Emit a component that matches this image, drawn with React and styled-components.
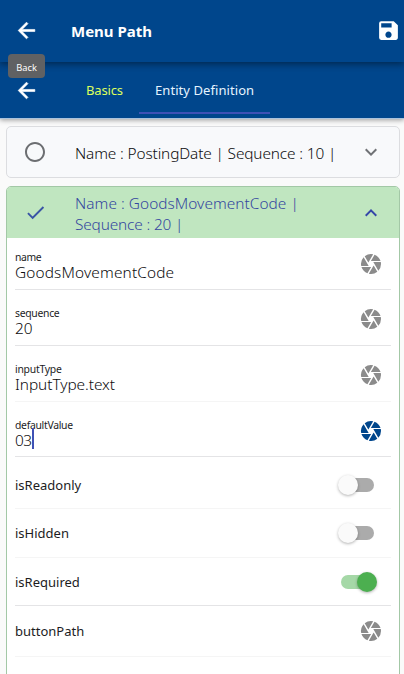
import React from "react";
import styled, { createGlobalStyle } from "styled-components";
import {
  MdArrowBack,
  MdSave,
  MdCamera,
  MdCheck,
  MdExpandMore,
  MdExpandLess,
  MdRadioButtonUnchecked,
} from "react-icons/md";

const GlobalStyle = createGlobalStyle`
  * { box-sizing: border-box; }
  body {
    margin: 0;
    overflow: hidden;
    background: #fafafa;
    font-family: "Noto Sans", "Open Sans", sans-serif;
  }
`;

const Page = styled.div`
  display: flex;
  flex-direction: column;
  height: 674px;
  overflow: hidden;
`;

const AppBar = styled.header`
  position: relative;
  z-index: 2;
  display: flex;
  align-items: center;
  flex: 0 0 62px;
  padding: 0 3px 2px 14px;
  color: #fff;
  background: #00468c;
  box-shadow: 0 2px 7px rgba(0, 0, 0, 0.45);
`;

const IconButton = styled.button`
  display: flex;
  padding: 0;
  border: 0;
  color: inherit;
  background: none;
  font-size: 25px;
`;

const BackButton = styled(IconButton)`
  path:last-child {
    stroke: currentColor;
    stroke-width: 0.6px;
  }
`;

const Title = styled.h1`
  flex: 1;
  margin: 2px 0 0 32px;
  font-size: 15px;
  font-weight: 750;
`;

const Tooltip = styled.div`
  position: absolute;
  left: 8px;
  top: 54px;
  width: 37px;
  height: 24px;
  border-radius: 4px;
  color: #fff;
  background: #606163;
  font-size: 9.3px;
  line-height: 28px;
  text-align: center;
`;

const TabBar = styled.nav`
  position: relative;
  z-index: 1;
  display: flex;
  align-items: center;
  flex: 0 0 56px;
  padding-left: 14px;
  color: #fff;
  background: #00468c;
  box-shadow: 0 1px 0 #a9c2dc, 0 2px 5px rgba(0, 0, 0, 0.4);
`;

const Tab = styled.div`
  height: 56px;
  width: ${(p) => p.$width}px;
  padding-left: 16px;
  margin-left: ${(p) => p.$gap || 0}px;
  color: ${(p) => (p.$active ? "#e6f4ff" : "#dcff5c")};
  font-size: 13px;
  line-height: 57px;
  letter-spacing: ${(p) => p.$tracking}px;
  white-space: nowrap;
`;

const ActiveTab = styled(Tab)`
  display: grid;
  grid-template-rows: 50px 2px;
  &::after {
    content: "";
    margin-left: -16px;
    background: #3f51b5;
  }
`;

const Panels = styled.main`
  display: flex;
  flex-direction: column;
  gap: 8px;
  flex: 1;
  min-height: 0;
  padding: 8px 4px 0 6px;
`;

const Panel = styled.section`
  flex: ${(p) => (p.$open ? "1 0 520px" : "0 0 52px")};
  border: 1px solid ${(p) => (p.$open ? "#a3c8a6" : "#dcdde0")};
  border-radius: 5px;
  overflow: hidden;
  background: ${(p) => (p.$open ? "#fff" : "#f8f9fb")};
`;

const PanelHeader = styled.div`
  display: grid;
  grid-template-columns: 68px 1fr 42px;
  align-items: center;
  height: ${(p) => (p.$open ? 51 : 50)}px;
  color: ${(p) => (p.$open ? "#34479f" : "#0c0c0e")};
  background: ${(p) => (p.$open ? "#c0e6c0" : "transparent")};
`;

const StateIcon = styled.span`
  display: flex;
  padding-left: ${(p) => p.$inset}px;
  color: ${(p) => p.$color};
  font-size: ${(p) => p.$size}px;
`;

const PanelTitle = styled.div`
  padding-top: 3px;
  font-size: 15.4px;
  font-weight: 350;
  line-height: 21px;
  white-space: nowrap;
`;

const TitleLine = styled.div`
  letter-spacing: ${(p) => p.$tracking}px;
`;

const Chevron = styled.span`
  display: flex;
  padding-left: 2px;
  font-size: 24px;
  color: ${(p) => (p.$open ? "#3547a8" : "#707276")};
`;

const Fields = styled.div`
  padding: 0 8px;
`;

const Row = styled.div`
  display: flex;
  align-items: center;
  justify-content: space-between;
  height: ${(p) => p.$height}px;
  border-bottom: 1px solid ${(p) => (p.$faint ? "#f5f5f5" : "#e4e4e6")};
`;

const ToggleLabel = styled.div`
  padding-top: ${(p) => p.$top || 0}px;
  color: #1c1c1e;
  font-size: 13px;
`;

const Entry = styled.div`
  align-self: flex-end;
  padding-bottom: 7px;
`;

const EntryLabel = styled.div`
  color: #1c1c1e;
  font-size: 10.4px;
  line-height: 12px;
  letter-spacing: ${(p) => p.$tracking}px;
`;

const EntryValue = styled.div`
  display: flex;
  align-items: center;
  height: ${(p) => p.$height}px;
  color: #0c0c0e;
  font-size: 15.4px;
  font-weight: 350;
  line-height: 19px;
  letter-spacing: ${(p) => p.$tracking}px;
`;

const Caret = styled.span`
  width: 2px;
  height: 21px;
  flex: none;
  margin-top: -4px;
  background: #3f51b5;
`;

const Aperture = styled.span`
  display: flex;
  margin: ${(p) => p.$top}px 8px 0 0;
  font-size: 24px;
  color: ${(p) => (p.$active ? "#00468c" : "#8b8b8b")};
`;

const Switch = styled.span`
  display: flex;
  align-items: center;
  justify-content: ${(p) => (p.$on ? "flex-end" : "flex-start")};
  width: 33px;
  height: 14px;
  margin: ${(p) => p.$top || 0}px 17px 0 0;
  border-radius: 7px;
  background: ${(p) => (p.$on ? "#a5d8a7" : "#ababab")};
`;

const Knob = styled.span`
  flex: none;
  width: 20px;
  height: 20px;
  margin: ${(p) => (p.$on ? "0 -3px 0 0" : "0 0 0 -3px")};
  border-radius: 50%;
  background: ${(p) => (p.$on ? "#4caf50" : "#fafafa")};
  box-shadow: 0 1px 3px rgba(0, 0, 0, 0.3);
`;

const entries = [
  { label: "name", value: "GoodsMovementCode", height: 52, top: 1, labelTracking: -0.4, tracking: 0.15 },
  { label: "sequence", value: "20", height: 56, top: 3, labelTracking: -0.3, tracking: 0 },
  { label: "inputType", value: "InputType.text", height: 56, top: 3, labelTracking: -0.25, tracking: -0.04, faint: true },
  { label: "defaultValue", value: "03", height: 55, top: 3, labelTracking: -0.3, tracking: -0.5, active: true },
];

const switches = [
  { label: "isReadonly", on: false, height: 52, top: 4, faint: true },
  { label: "isHidden", on: false, height: 49, top: 0, faint: true },
  { label: "isRequired", on: true, height: 48, top: 0 },
];

export default function App() {
  return (
    <Page>
      <GlobalStyle />
      <AppBar>
        <BackButton aria-label="Back"><MdArrowBack /></BackButton>
        <Title>Menu Path</Title>
        <IconButton aria-label="Save"><MdSave /></IconButton>
        <Tooltip role="tooltip">Back</Tooltip>
      </AppBar>
      <TabBar>
        <BackButton aria-label="Back"><MdArrowBack /></BackButton>
        <Tab $width={69} $gap={31} $tracking={-0.15}>Basics</Tab>
        <ActiveTab $active $width={131} $tracking={0.07}>Entity Definition</ActiveTab>
      </TabBar>
      <Panels>
        <Panel>
          <PanelHeader>
            <StateIcon $inset={16} $size={24} $color="#6c6e71"><MdRadioButtonUnchecked /></StateIcon>
            <PanelTitle>
              <TitleLine $tracking={-0.13}>Name : PostingDate | Sequence : 10 |</TitleLine>
            </PanelTitle>
            <Chevron><MdExpandMore /></Chevron>
          </PanelHeader>
        </Panel>
        <Panel $open>
          <PanelHeader $open>
            <StateIcon $inset={17} $size={23} $color="#3a55a5"><MdCheck /></StateIcon>
            <PanelTitle>
              <TitleLine $tracking={0.05}>Name : GoodsMovementCode |</TitleLine>
              <TitleLine $tracking={-0.15}>Sequence : 20 |</TitleLine>
            </PanelTitle>
            <Chevron $open><MdExpandLess /></Chevron>
          </PanelHeader>
          <Fields>
            {entries.map((e) => (
              <Row key={e.label} $height={e.height} $faint={e.faint}>
                <Entry>
                  <EntryLabel $tracking={e.labelTracking}>{e.label}</EntryLabel>
                  <EntryValue $height={e.active ? 18 : 19} $tracking={e.tracking}>
                    {e.value}{e.active && <Caret />}
                  </EntryValue>
                </Entry>
                <Aperture $active={e.active} $top={e.top}><MdCamera /></Aperture>
              </Row>
            ))}
            {switches.map((s) => (
              <Row key={s.label} $height={s.height} $faint={s.faint}>
                <ToggleLabel $top={s.top}>{s.label}</ToggleLabel>
                <Switch $on={s.on} $top={s.top}><Knob $on={s.on} /></Switch>
              </Row>
            ))}
            <Row $height={51} $faint>
              <ToggleLabel>buttonPath</ToggleLabel>
              <Aperture $top={0}><MdCamera /></Aperture>
            </Row>
          </Fields>
        </Panel>
      </Panels>
    </Page>
  );
}
